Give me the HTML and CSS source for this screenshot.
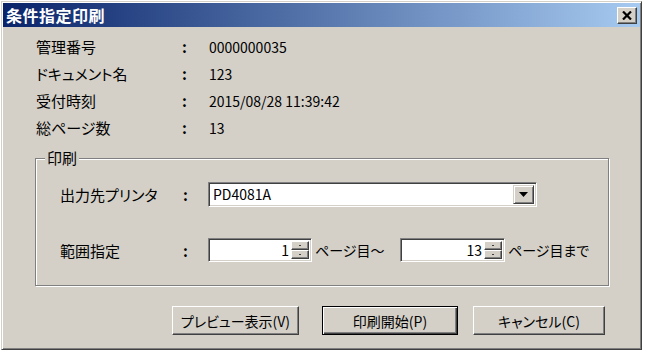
FILE: index.html
```html
<!DOCTYPE html>
<html lang="ja">

<head>
    <meta charset="UTF-8">
    <title>条件指定印刷</title>
    <link rel="stylesheet" href="styles.css">
</head>

<body>

    <div class="dialog">
        <!-- Title bar -->
        <div class="titlebar">
            <span class="title">条件指定印刷</span>
            <button class="close-btn">
                <svg width="10" height="9" viewBox="0 0 10 9">
                    <path d="M1 0.5 L9 8.5 M9 0.5 L1 8.5" stroke="#000" stroke-width="2.2" />
                </svg>
            </button>
        </div>

        <div class="body">
            <!-- Document info -->
            <div class="info">
                <div class="info-row">
                    <span class="label">管理番号</span>
                    <span class="colon">:</span>
                    <span class="value">0000000035</span>
                </div>
                <div class="info-row">
                    <span class="label">ドキュメント名</span>
                    <span class="colon">:</span>
                    <span class="value">123</span>
                </div>
                <div class="info-row">
                    <span class="label">受付時刻</span>
                    <span class="colon">:</span>
                    <span class="value">2015/08/28 11:39:42</span>
                </div>
                <div class="info-row">
                    <span class="label">総ページ数</span>
                    <span class="colon">:</span>
                    <span class="value">13</span>
                </div>
            </div>

            <!-- Print group -->
            <div class="group">
                <span class="group-title">印刷</span>

                <div class="field-row">
                    <span class="field-label">出力先プリンタ</span>
                    <span class="field-colon">:</span>
                    <div class="select">
                        <span class="select-text">PD4081A</span>
                        <span class="select-arrow">
                            <svg width="9" height="5" viewBox="0 0 9 5">
                                <path d="M0 0 H9 L4.5 5 Z" fill="#000" />
                            </svg>
                        </span>
                    </div>
                </div>

                <div class="field-row range-row">
                    <span class="field-label">範囲指定</span>
                    <span class="field-colon">:</span>
                    <div class="spinner">
                        <span class="spinner-text">1</span>
                        <span class="spin-buttons">
                            <span class="spin-btn"><i class="dot"></i></span>
                            <span class="spin-btn"><i class="dot"></i></span>
                        </span>
                    </div>
                    <span class="range-text range-from">ページ目～</span>
                    <div class="spinner spinner-to">
                        <span class="spinner-text">13</span>
                        <span class="spin-buttons">
                            <span class="spin-btn"><i class="dot"></i></span>
                            <span class="spin-btn"><i class="dot"></i></span>
                        </span>
                    </div>
                    <span class="range-text">ページ目まで</span>
                </div>
            </div>

            <!-- Buttons -->
            <div class="actions">
                <button class="btn btn-preview">プレビュー表示(V)</button>
                <button class="btn btn-default">印刷開始(P)</button>
                <button class="btn btn-cancel">キャンセル(C)</button>
            </div>
        </div>
    </div>

</body>

</html>
```

FILE: styles.css
```css
body {
    margin: 0;
    background: #fff;
    font-family: "Noto Sans CJK JP", sans-serif;
    font-feature-settings: "palt";
    color: #000;
}

.dialog {
    margin: 1px;
    width: 641px;
    height: 349px;
    box-sizing: border-box;
    padding: 1px;
    background: #d4d0c8;
    border: 1px solid;
    border-color: #d4d0c8 #404040 #404040 #d4d0c8;
    box-shadow: inset 1px 1px 0 #fff, inset -1px -1px 0 #808080;
}

.titlebar {
    height: 24px;
    display: flex;
    align-items: center;
    justify-content: space-between;
    padding: 0 3px;
    background: linear-gradient(to right, #0a246a, #a6caf0);
}

.title {
    color: #fff;
    font-weight: bold;
    font-size: 16px;
    line-height: 24px;
    letter-spacing: 0.5px;
}

.close-btn {
    width: 20px;
    height: 17px;
    padding: 0;
    display: flex;
    align-items: center;
    justify-content: center;
    background: #d4d0c8;
    border: 1px solid;
    border-color: #fff #404040 #404040 #fff;
    box-shadow: inset -1px -1px 0 #808080;
}

.body {
    padding: 6px 0 0 33px;
}

.info-row {
    display: flex;
    align-items: center;
    height: 27px;
}

.label {
    width: 146px;
    font-size: 15px;
}

.colon {
    width: 27px;
    font-size: 15px;
    font-weight: bold;
}

.value {
    font-size: 14px;
}

.group {
    position: relative;
    margin: 17px 0 0 -1px;
    width: 574px;
    box-sizing: border-box;
    padding: 23px 0 23px 24px;
    border: 1px solid #808080;
    box-shadow: inset 1px 1px 0 #fff, 1px 1px 0 #fff;
}

.group-title {
    position: absolute;
    top: -11px;
    left: 9px;
    padding: 0 2px;
    background: #d4d0c8;
    font-size: 15px;
    line-height: 20px;
}

.field-row {
    display: flex;
    align-items: center;
    font-size: 15px;
}

.range-row {
    margin-top: 31px;
}

.field-label {
    width: 123px;
}

.field-colon {
    width: 25px;
    font-weight: bold;
}

.select {
    width: 329px;
    height: 25px;
    box-sizing: border-box;
    display: flex;
    align-items: stretch;
    background: #fff;
    border: 1px solid;
    border-color: #808080 #fff #fff #808080;
    box-shadow: inset 1px 1px 0 #404040, inset -1px -1px 0 #d4d0c8;
    padding: 2px;
}

.select-text {
    flex: 1;
    font-size: 14px;
    line-height: 19px;
    padding-left: 2px;
}

.select-arrow {
    width: 21px;
    box-sizing: border-box;
    display: flex;
    align-items: center;
    justify-content: center;
    background: #d4d0c8;
    border: 1px solid;
    border-color: #d4d0c8 #404040 #404040 #d4d0c8;
    box-shadow: inset 1px 1px 0 #fff, inset -1px -1px 0 #808080;
}

.spinner {
    width: 104px;
    height: 24px;
    box-sizing: border-box;
    display: flex;
    background: #fff;
    border: 1px solid;
    border-color: #808080 #fff #fff #808080;
    box-shadow: inset 1px 1px 0 #404040, inset -1px -1px 0 #d4d0c8;
    padding: 2px;
}

.spinner-to {
    width: 105px;
}

.spinner-text {
    flex: 1;
    text-align: right;
    font-size: 14px;
    line-height: 18px;
    padding-right: 2px;
}

.spin-buttons {
    width: 18px;
    display: flex;
    flex-direction: column;
}

.spin-btn {
    flex: 1;
    display: flex;
    align-items: center;
    justify-content: center;
    background: #d4d0c8;
    border: 1px solid;
    border-color: #fff #404040 #404040 #fff;
    box-shadow: inset -1px -1px 0 #808080;
}

.dot {
    width: 2px;
    height: 1px;
    background: #404040;
}

.range-text {
    margin-left: 3px;
    font-size: 14px;
}

.range-from {
    width: 85px;
}

.actions {
    display: flex;
    margin-top: 20px;
    padding-left: 136px;
}

.btn {
    height: 29px;
    padding: 0;
    font-family: "Noto Sans CJK JP", sans-serif;
    font-feature-settings: "palt";
    font-size: 14px;
    color: #000;
    background: #d4d0c8;
    border: 1px solid;
    border-color: #fff #404040 #404040 #fff;
    box-shadow: inset -1px -1px 0 #808080;
}

.btn-preview {
    width: 127px;
    margin-right: 23px;
}

.btn-default {
    width: 136px;
    margin-right: 15px;
    border-color: #000;
    box-shadow: inset 1px 1px 0 #fff, inset -1px -1px 0 #404040, inset -2px -2px 0 #808080;
}

.btn-cancel {
    width: 132px;
}
```
